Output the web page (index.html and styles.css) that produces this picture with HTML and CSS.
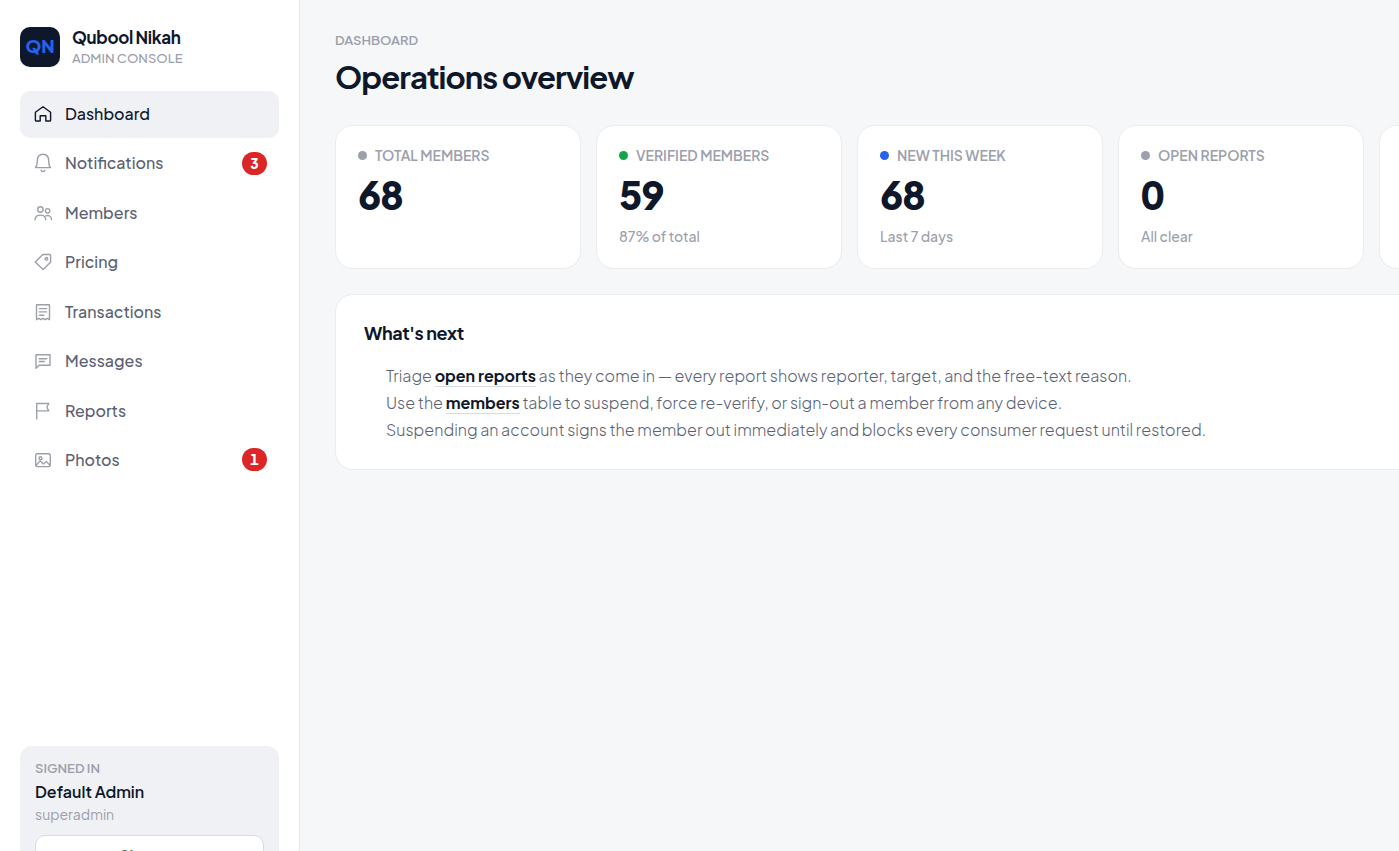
FILE: index.html
```html
<!DOCTYPE html>
<html lang="en">
<head>
    <meta charset="UTF-8">
    <meta name="viewport" content="width=device-width, initial-scale=1.0">
    <title>Qubool Nikah - Admin Console</title>
    <link rel="stylesheet" href="styles.css">
</head>
<body>
<div class="app">
    <aside class="sidebar">
        <div class="brand">
            <div class="brand-logo">QN</div>
            <div>
                <div class="brand-name">Qubool Nikah</div>
                <div class="brand-sub">ADMIN CONSOLE</div>
            </div>
        </div>

        <nav class="nav">
            <a href="#dashboard" class="nav-link active">
                <svg class="icon" viewBox="0 0 20 20"><path d="M2.4 8.3 10 2.7l7.6 5.6v7.9a.8.8 0 0 1-.8.8h-4v-5.3H7.2V17h-4a.8.8 0 0 1-.8-.8z"/></svg>
                Dashboard
            </a>
            <a href="#notifications" class="nav-link">
                <svg class="icon" viewBox="0 0 20 20"><path d="M2.500 14.600c1.500-1.500 1.800-3.400 1.800-6.600C4.300 4 6.300 1.200 10 1.200S15.700 4 15.700 8c0 3.200.3 5.100 1.800 6.600zM8.200 17.200c.3 1 .9 1.400 1.800 1.400s1.500-.4 1.800-1.400"/></svg>
                Notifications
                <span class="badge">3</span>
            </a>
            <a href="#members" class="nav-link">
                <svg class="icon" viewBox="0 0 20 20"><circle cx="7.400" cy="6.500" r="2.700"/><circle cx="14.600" cy="7.800" r="2.200"/><path d="M2 16.800c.2-3 2.300-4.700 5.400-4.700s5.200 1.700 5.400 4.700M13 12.800c3.200-1 5.400.8 5.600 4"/></svg>
                Members
            </a>
            <a href="#pricing" class="nav-link">
                <svg class="icon" viewBox="0 0 20 20"><path d="M9.800 2.500h7c.5 0 .8.300.8.800v6.900L10 17.500 2.300 10z"/><circle cx="13.400" cy="6.800" r="1.300"/></svg>
                Pricing
            </a>
            <a href="#transactions" class="nav-link">
                <svg class="icon" viewBox="0 0 20 20"><path d="M3.500 2.700h13v15l-2.200-1.400-2.100 1.400-2.200-1.400-2.200 1.400-2.100-1.400-2.200 1.400zM6.300 6.600h7.400M6.300 9.900h7.400M6.300 13.200h4.600"/></svg>
                Transactions
            </a>
            <a href="#messages" class="nav-link">
                <svg class="icon" viewBox="0 0 20 20"><path d="M3 3.800h14v10.400H6L3 17.200zM6.300 7.700h7.400M6.300 10.500h5"/></svg>
                Messages
            </a>
            <a href="#reports" class="nav-link">
                <svg class="icon" viewBox="0 0 20 20"><path d="M3.700 17.700V2.500h12l-1.800 3.700 1.800 3.700h-12"/></svg>
                Reports
            </a>
            <a href="#photos" class="nav-link">
                <svg class="icon" viewBox="0 0 20 20"><rect x="2.700" y="3.800" width="14.600" height="12.800" rx="1.500"/><circle cx="7.500" cy="8.300" r="1.500"/><path d="m3 15.500 4.200-4.600 3.200 3.200 2.800-2.700 3.800 3.800"/></svg>
                Photos
                <span class="badge">1</span>
            </a>
        </nav>

        <div class="account">
            <div class="account-label">SIGNED IN</div>
            <div class="account-name">Default Admin</div>
            <div class="account-role">superadmin</div>
            <button type="button" class="sign-out">Sign out</button>
        </div>
    </aside>

    <main class="main">
        <div class="content">
            <div class="crumb">DASHBOARD</div>
            <h1>Operations overview</h1>

            <section class="stats">
                <div class="card">
                    <div class="card-label"><span class="dot"></span>TOTAL MEMBERS</div>
                    <div class="card-value">68</div>
                </div>
                <div class="card">
                    <div class="card-label"><span class="dot green"></span>VERIFIED MEMBERS</div>
                    <div class="card-value">59</div>
                    <div class="card-hint">87% of total</div>
                </div>
                <div class="card">
                    <div class="card-label"><span class="dot blue"></span>NEW THIS WEEK</div>
                    <div class="card-value">68</div>
                    <div class="card-hint">Last 7 days</div>
                </div>
                <div class="card">
                    <div class="card-label"><span class="dot"></span>OPEN REPORTS</div>
                    <div class="card-value">0</div>
                    <div class="card-hint">All clear</div>
                </div>
                <div class="card"></div>
            </section>

            <section class="panel">
                <h2>What's next</h2>
                <ul>
                    <li>Triage <a href="#reports">open reports</a> as they come in — every report shows reporter, target, and the free-text reason.</li>
                    <li>Use the <a href="#members">members</a> table to suspend, force re-verify, or sign-out a member from any device.</li>
                    <li>Suspending an account signs the member out immediately and blocks every consumer request until restored.</li>
                </ul>
            </section>
        </div>
    </main>
</div>
</body>
</html>
```
FILE: styles.css
```css
* {
    box-sizing: border-box;
}

body {
    margin: 0;
    font-family: "Plus Jakarta Sans", Inter, sans-serif;
    font-size: 16px;
    color: #0f172a;
    background-color: #f6f7f9;
}

.app {
    display: flex;
    height: 100vh;
    overflow: hidden;
}

/* sidebar */
.sidebar {
    display: flex;
    flex-direction: column;
    flex: 0 0 300px;
    min-height: 915px;
    padding: 27px 20px 24px;
    background-color: #fff;
    border-right: 1px solid #e8e9ed;
}

.brand {
    display: flex;
    align-items: center;
    gap: 12px;
    height: 40px;
    margin-bottom: 24px;
}

.brand-logo {
    width: 40px;
    height: 40px;
    border-radius: 10px;
    background-color: #0f172a;
    color: #2563eb;
    font-size: 18px;
    font-weight: 800;
    line-height: 38px;
    text-align: center;
}

.brand-name {
    font-size: 17px;
    font-weight: 700;
    line-height: 22px;
    letter-spacing: -0.02em;
}

.brand-sub,
.account-label {
    color: #9ca0ab;
    font-size: 13px;
    font-weight: 500;
    line-height: 20px;
}

.nav {
    display: flex;
    flex-direction: column;
    justify-content: space-between;
    height: 393px;
}

.nav-link {
    display: flex;
    align-items: center;
    gap: 12px;
    height: 47px;
    padding: 0 12px 1px 13px;
    border-radius: 10px;
    color: #5b6172;
    font-weight: 500;
    line-height: 22px;
    text-decoration: none;
}

.nav-link.active {
    background-color: #f0f1f5;
    color: #0f172a;
}

.icon {
    width: 20px;
    height: 20px;
    fill: none;
    stroke: #9ca0ab;
    stroke-width: 1.4;
    stroke-linecap: round;
    stroke-linejoin: round;
}

.active .icon {
    stroke: #0f172a;
}

.badge {
    min-width: 25px;
    margin-left: auto;
    border-radius: 12px;
    background-color: #dc2626;
    color: #fff;
    font-size: 14px;
    font-weight: 800;
    font-variant-numeric: tabular-nums;
    line-height: 23px;
    text-align: center;
}

.account {
    margin-top: auto;
    padding: 13px 15px 18px;
    border-radius: 12px;
    background-color: #f0f1f5;
}

.account-label {
    font-weight: 600;
    line-height: 19px;
}

.account-name {
    font-weight: 600;
    line-height: 27px;
}

.account-role {
    color: #9ca0ab;
    font-size: 14px;
    line-height: 18px;
}

.sign-out {
    width: 100%;
    height: 38px;
    margin-top: 12px;
    border: 1px solid #d9dbe1;
    border-radius: 10px;
    background-color: #fff;
    color: #5b6172;
    font-family: inherit;
    font-size: 15px;
    font-weight: 600;
}

/* main area, wide rows run past the right edge */
.main {
    flex: 1;
    min-width: 0;
    padding: 30px 35px;
    overflow: hidden;
}

.content {
    width: max-content;
    min-width: 100%;
}

.crumb {
    color: #9ca0ab;
    font-size: 13px;
    font-weight: 600;
    line-height: 20px;
}

h1 {
    margin: 7px 0 28px;
    font-size: 31px;
    font-weight: 700;
    line-height: 40px;
    letter-spacing: -0.03em;
}

.stats {
    display: grid;
    grid-template-columns: repeat(5, minmax(246px, 1fr));
    gap: 15px;
    margin-bottom: 25px;
}

.card,
.panel {
    border: 1px solid #ebecef;
    border-radius: 18px;
    background-color: #fff;
}

.card {
    min-height: 144px;
    padding: 20px 22px;
}

.card-label {
    display: flex;
    align-items: center;
    gap: 8px;
    color: #9ca0ab;
    font-size: 14px;
    font-weight: 600;
    line-height: 19px;
}

.dot {
    width: 9px;
    height: 9px;
    border-radius: 50%;
    background-color: #9ca0ab;
}

.dot.green {
    background-color: #16a34a;
}

.dot.blue {
    background-color: #2563eb;
}

.card-value {
    margin: 8px 0 9px;
    font-size: 39px;
    font-weight: 800;
    font-variant-numeric: tabular-nums;
    line-height: 44px;
    letter-spacing: -0.03em;
}

.card-hint {
    color: #9ca0ab;
    font-size: 14px;
    font-weight: 500;
    line-height: 20px;
}

.panel {
    padding: 26px 28px 26px;
}

h2 {
    margin: 0 0 17px;
    font-size: 18px;
    font-weight: 700;
    line-height: 24px;
    letter-spacing: -0.02em;
}

ul {
    margin: 0;
    padding-left: 22px;
    list-style: none;
}

li {
    color: #5b6172;
    font-weight: 300;
    line-height: 27px;
}

li a {
    border-bottom: 1px solid #d9dbe1;
    color: #0f172a;
    font-weight: 700;
    text-decoration: none;
}
```
